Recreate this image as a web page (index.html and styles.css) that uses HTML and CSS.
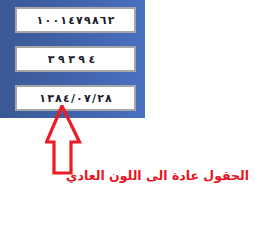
FILE: index.html
```html
<!DOCTYPE html>
<html lang="ar">
<head>
    <meta charset="UTF-8">
    <meta name="viewport" content="width=device-width, initial-scale=1.0">
    <title>Document</title>
    <link rel="stylesheet" href="styles.css">
</head>
<body>
    <div class="panel">
        <div class="field"><span class="num"><i>١</i><i>٠</i><i>٠</i><i>١</i><i>٤</i><i>٧</i><i>٩</i><i>٨</i><i>٦</i><i>٢</i></span></div>
        <div class="field"><span class="num wide"><i>٣</i><i>٩</i><i>٣</i><i>٩</i><i>٤</i></span></div>
        <div class="field"><span class="num"><i>١</i><i>٣</i><i>٨</i><i>٤</i><i>/</i><i>٠</i><i>٧</i><i>/</i><i>٢</i><i>٨</i></span></div>
    </div>
    <svg class="arrow" width="40" height="72" viewBox="0 0 40 72">
        <path d="M17 1 L1.5 37 L9 37 L9 68 L26 68 L26 37 L34.5 37 Z" fill="none" stroke="#ec1c24" stroke-width="3.2" stroke-linejoin="miter"/>
    </svg>
    <p class="note" dir="rtl">الحقول عادة الى اللون العادي</p>
</body>
</html>
```

FILE: styles.css
```css
body{
    margin: 0;
    background: #fff;
    width: 261px;
    height: 230px;
    position: relative;
    overflow: hidden;
}
.panel{
    width: 145px;
    height: 118px;
    padding-top: 7px;
    box-sizing: border-box;
    background: linear-gradient(90deg, #3a5894 0%, #4264ad 55%, #4a70c2 100%);
    display: flex;
    flex-direction: column;
    gap: 13px;
}
.field{
    margin-left: 15px;
    width: 121px;
    height: 26px;
    box-sizing: border-box;
    background: #fff;
    border: 2px solid #a6a6a6;
    display: flex;
    justify-content: center;
    align-items: center;
}
.num{
    display: flex;
    gap: 1.2px;
    font-family: "DejaVu Sans", sans-serif;
    font-weight: bold;
    font-size: 11px;
    color: #1b1d2c;
    direction: ltr;
}
.num i{
    font-style: normal;
}
.num.wide{
    gap: 3.5px;
    margin-right: 8px;
}
.arrow{
    position: absolute;
    left: 45px;
    top: 105px;
}
.note{
    margin: 0;
    position: absolute;
    right: 12px;
    top: 168px;
    font-family: "DejaVu Sans", sans-serif;
    font-weight: bold;
    font-size: 12.5px;
    color: #e8141e;
}
```
